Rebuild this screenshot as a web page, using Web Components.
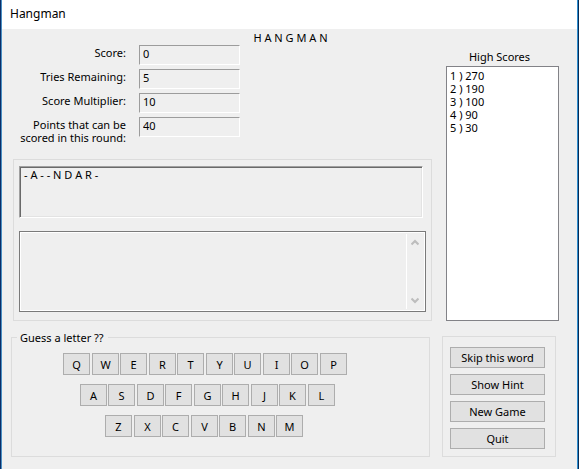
<!DOCTYPE html>
<html lang="en">
<head>
<meta charset="utf-8">
<title>Hangman</title>
<style>
  html, body { height: 100%; margin: 0; }
  body { font: 11px/13px "Noto Sans", "Open Sans", sans-serif; color: #000; background: #efefef; }
</style>
</head>
<body>
<hangman-window caption="Hangman">
  <score-board slot="scores"></score-board>
  <word-panel slot="word"></word-panel>
  <high-scores slot="high"></high-scores>
  <letter-keys slot="keys"></letter-keys>
  <game-actions slot="actions"></game-actions>
</hangman-window>

<script>
const define = (name, html, setup) => customElements.define(name, class extends HTMLElement {
  constructor() {
    super();
    const root = this.attachShadow({ mode: 'open' });
    root.innerHTML = '<style>*{box-sizing:border-box}</style>' + html;
    if (setup) setup(root, this);
  }
});

define('hangman-window', `
  <style>
    :host { display: flex; flex-direction: column; box-sizing: border-box; min-height: 100%;
      border-left: 1px solid #0b2d66; border-right: 1px solid #062a55; }
    .frame { flex: 1; border-left: 1px solid #4a90c4; border-right: 1px solid #2f8fd0; background: #efefef; }
    header { height: 29px; padding-left: 8px; background: #fff; font-size: 12px; line-height: 28px; }
    h1 { margin: 0; padding: 2px 0 1px 2px; font: inherit; text-align: center; }
    main { display: grid; grid-template-columns: 1fr 117px; gap: 10px; padding: 0 18px 12px 9px; }
    .left { display: flex; flex-direction: column; gap: 15px; padding-left: 2px; }
    .right { display: flex; padding-left: 4px; }
    .right ::slotted(*) { flex: 1; }
    .keys { display: grid; padding-right: 2px; }
    .actions { display: grid; padding: 5px 3px 0 0; }
  </style>
  <div class="frame">
    <header></header>
    <h1>H A N G M A N</h1>
    <main>
      <div class="left"><slot name="scores"></slot><slot name="word"></slot></div>
      <div class="right"><slot name="high"></slot></div>
      <div class="keys"><slot name="keys"></slot></div>
      <div class="actions"><slot name="actions"></slot></div>
    </main>
  </div>`, (root, host) => {
    root.querySelector('header').textContent = host.getAttribute('caption');
  });

define('score-board', `
  <style>
    :host { display: grid; grid-template-columns: 113px 101px; column-gap: 13px; row-gap: 4px; }
    label { padding-top: 1px; text-align: right; white-space: pre-line; }
    input { width: 100%; height: 20px; margin: 0; padding: 0 3px 4px; border: 1px solid; border-color: #9c9c9c #fff #fff #9c9c9c;
      border-radius: 0; background: #efefef; font: inherit; color: inherit; outline: 0; }
  </style>
  <label for="score">Score:</label><input id="score" readonly value="0">
  <label for="tries">Tries Remaining:</label><input id="tries" readonly value="5">
  <label for="mult">Score Multiplier:</label><input id="mult" readonly value="10">
  <label for="points">Points that can be
scored in this round:</label><input id="points" readonly value="40">`);

define('word-panel', `
  <style>
    :host { display: flex; flex-direction: column; gap: 13px; height: 162px; box-sizing: border-box;
      padding: 6px 5px 8px; border: 1px solid #dcdcdc; }
    textarea { display: block; resize: none; margin: 0; border: 0; border-radius: 0; padding: 0; background: #efefef;
      font: inherit; color: inherit; outline: 0; overflow: hidden; }
    .word { height: 52px; margin-right: 3px; padding: 1px 4px; border: 1px solid; border-color: #a0a0a0 #fff #fff #a0a0a0;
      box-shadow: inset 1px 1px #696969, inset -1px -1px #e3e3e3; }
    .log { flex: 1; display: flex; border: 1px solid #7a7a7a; box-shadow: inset 0 0 0 1px #fff; padding: 2px; }
    .log textarea { flex: 1; min-width: 0; height: auto; }
    .bar { width: 17px; display: flex; flex-direction: column; justify-content: space-between; border-left: 1px solid #fff; }
    button { width: 100%; height: 17px; padding: 0; border: 0; background: none; display: grid; place-items: center; }
    svg { display: block; fill: none; stroke: #bdbdbd; stroke-width: 2.200; }
  </style>
  <textarea class="word" readonly aria-label="Word">- A - - N D A R -</textarea>
  <div class="log">
    <textarea readonly aria-label="Messages"></textarea>
    <div class="bar">
      <button disabled aria-label="Scroll up"><svg width="8" height="7"><path d="M.5 5.500 4 2l3.500 3.500"/></svg></button>
      <button disabled aria-label="Scroll down"><svg width="8" height="7"><path d="M.5 1.500 4 5l3.500-3.500"/></svg></button>
    </div>
  </div>`);

define('high-scores', `
  <style>
    :host { display: flex; flex-direction: column; padding-top: 5px; box-sizing: border-box; }
    label { text-align: center; padding-right: 6px; margin-bottom: 3px; }
    select { flex: 1; width: 100%; height: 0; margin: 0; padding: 1px 3px; border: 1px solid #828287; border-radius: 0; background: #fff;
      font: inherit; color: inherit; outline: 0; overflow: hidden; }
    option { padding: 0; min-height: 13px; height: 13px; line-height: 13px; }
  </style>
  <label for="list">High Scores</label>
  <select id="list" size="19">
    <option>1 ) 270</option><option>2 ) 190</option><option>3 ) 100</option><option>4 ) 90</option><option>5 ) 30</option>
  </select>`);

define('letter-keys', `
  <style>
    :host { display: block; }
    fieldset { height: 126px; min-width: 0; margin: 0; padding: 9px 0 0 51px; border: 1px solid #dcdcdc; }
    legend { margin-left: -46px; padding: 0 4px 0 3px; }
    .row { display: flex; margin-bottom: 9px; }
    .row:nth-of-type(2) { padding-left: 17px; }
    .row:nth-of-type(3) { padding-left: 42px; }
    button { width: 27px; height: 22px; margin: 0 1px 0 0; padding: 0; border: 1px solid #adadad; border-radius: 0;
      background: #e1e1e1; font: inherit; color: inherit; }
    .row:nth-of-type(odd) button:nth-child(odd), .row:nth-of-type(even) button:nth-child(even) { margin-right: 2px; }
  </style>
  <fieldset><legend>Guess a letter ??</legend></fieldset>`, root => {
    const box = root.querySelector('fieldset');
    for (const letters of ['QWERTYUIOP', 'ASDFGHJKL', 'ZXCVBNM']) {
      const row = document.createElement('div');
      row.className = 'row';
      for (const letter of letters) {
        const key = document.createElement('button');
        key.type = 'button';
        key.textContent = letter;
        row.append(key);
      }
      box.append(row);
    }
  });

define('game-actions', `
  <style>
    :host { display: flex; flex-direction: column; gap: 6px; box-sizing: border-box; padding: 10px 10px 7px 7px; border: 1px solid #dcdcdc; }
    button { height: 21px; margin: 0; padding: 0 0 1px; border: 1px solid #adadad; border-radius: 0; background: #e1e1e1;
      font: inherit; color: inherit; }
  </style>
  <button type="button">Skip this word</button>
  <button type="button">Show Hint</button>
  <button type="button">New Game</button>
  <button type="button">Quit</button>`);
</script>
</body>
</html>
